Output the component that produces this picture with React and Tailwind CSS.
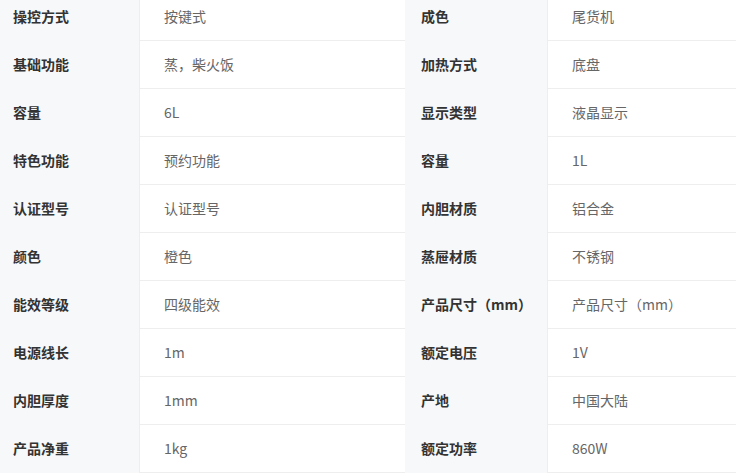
import React from "react";

const rows = [
  ["操控方式", "按键式", "成色", "尾货机"],
  ["基础功能", "蒸，柴火饭", "加热方式", "底盘"],
  ["容量", "6L", "显示类型", "液晶显示"],
  ["特色功能", "预约功能", "容量", "1L"],
  ["认证型号", "认证型号", "内胆材质", "铝合金"],
  ["颜色", "橙色", "蒸屉材质", "不锈钢"],
  ["能效等级", "四级能效", "产品尺寸（mm）", "产品尺寸（mm）"],
  ["电源线长", "1m", "额定电压", "1V"],
  ["内胆厚度", "1mm", "产地", "中国大陆"],
  ["产品净重", "1kg", "额定功率", "860W"],
];

function Label({ children }) {
  return (
    <div className="w-[143px] shrink-0 h-12 flex items-center pl-4 pb-[2px] bg-[#f7f8fa] border-r border-[#eceef1] text-[14px] font-semibold text-[#333333]">
      {children}
    </div>
  );
}

function Value({ children }) {
  return (
    <div className="w-[265px] shrink-0 h-12 flex items-center pl-6 pb-[1px] bg-white border-b border-[#eeeeee] text-[14px] text-[#666666]">
      {children}
    </div>
  );
}

export default function App() {
  return (
    <div
      className="w-[736px] h-[474px] overflow-hidden bg-white"
      style={{ fontFamily: '"Noto Sans CJK SC", "Noto Sans", sans-serif' }}
    >
      <div className="-mt-[7px] -ml-[3px] w-[816px] flex flex-col">
        {rows.map((r, i) => (
          <div key={i} className="flex">
            <Label>{r[0]}</Label>
            <Value>{r[1]}</Value>
            <Label>{r[2]}</Label>
            <Value>{r[3]}</Value>
          </div>
        ))}
      </div>
    </div>
  );
}
